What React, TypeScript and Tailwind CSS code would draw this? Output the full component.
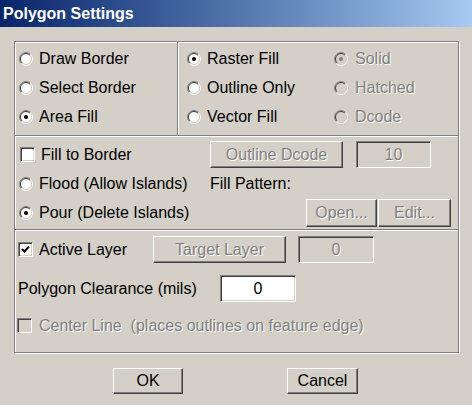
import React from "react";

const dis = "text-[#808080] [text-shadow:1px_1px_0_#fff]";

const Radio = ({ checked, disabled }: { checked?: boolean; disabled?: boolean }) => (
  <svg width="14" height="14" viewBox="0 0 14 14" className="shrink-0">
    <circle cx="7" cy="7" r="5.5" fill={disabled ? "#d4d0c8" : "#fff"} />
    <path d="M2.4 11.6 A6.5 6.5 0 0 1 11.6 2.4" stroke="#808080" strokeWidth="1" fill="none" />
    <path d="M11.6 2.4 A6.5 6.5 0 0 1 2.4 11.6" stroke="#fff" strokeWidth="1" fill="none" />
    <path d="M3.1 10.9 A5.5 5.5 0 0 1 10.9 3.1" stroke="#404040" strokeWidth="1" fill="none" />
    <path d="M10.9 3.1 A5.5 5.5 0 0 1 3.1 10.9" stroke="#d4d0c8" strokeWidth="1" fill="none" />
    {checked && <circle cx="7" cy="7" r="2" fill={disabled ? "#808080" : "#000"} />}
  </svg>
);

const Check = ({ checked, disabled }: { checked?: boolean; disabled?: boolean }) => (
  <div
    className={`w-[15px] h-[15px] shrink-0 border border-[#808080] border-r-white border-b-white shadow-[inset_1px_1px_0_#404040,inset_-1px_-1px_0_#d4d0c8] flex items-center justify-center ${
      disabled ? "bg-[#d4d0c8]" : "bg-white"
    }`}
  >
    {checked && (
      <svg width="9" height="9" viewBox="0 0 9 9">
        <path d="M1 4 L3.5 6.5 L8 1.5" stroke="#000" strokeWidth="2" fill="none" />
      </svg>
    )}
  </div>
);

const Option = ({
  label,
  checked,
  disabled,
  box,
  gap = "ml-[6px]",
}: {
  label: string;
  checked?: boolean;
  disabled?: boolean;
  box?: boolean;
  gap?: string;
}) => (
  <div className="flex items-center h-[29px]">
    {box ? <Check checked={checked} disabled={disabled} /> : <Radio checked={checked} disabled={disabled} />}
    <span className={`${gap} whitespace-pre ${disabled ? dis : "text-black"}`}>{label}</span>
  </div>
);

const Btn = ({ label, disabled, w, h = "h-[27px]" }: { label: string; disabled?: boolean; w: string; h?: string }) => (
  <div
    className={`${w} ${h} shrink-0 flex items-center justify-center bg-[#d4d0c8] border border-t-white border-l-white border-r-[#404040] border-b-[#404040] shadow-[inset_-1px_-1px_0_#808080] ${
      disabled ? dis : "text-black"
    }`}
  >
    {label}
  </div>
);

const Field = ({ value, disabled, w }: { value: string; disabled?: boolean; w: string }) => (
  <div
    className={`${w} h-[27px] shrink-0 flex items-center justify-center border border-[#808080] border-r-white border-b-white shadow-[inset_1px_1px_0_#404040,inset_-1px_-1px_0_#d4d0c8] ${
      disabled ? "bg-[#d4d0c8] " + dis : "bg-white text-black"
    }`}
  >
    {value}
  </div>
);

const HLine = () => <div className="h-[2px] border-t border-[#808080] border-b border-b-white" />;

export default function App() {
  return (
    <div className="w-[472px] h-[405px] bg-[#d4d0c8] text-[16px] leading-none font-['Liberation_Sans',Arial,sans-serif] overflow-hidden">
      <div className="h-[27px] flex items-center pl-[3px] bg-gradient-to-r from-[#0a246a] to-[#a6caf0] text-white font-bold">
        Polygon Settings
      </div>

      <div className="ml-[14px] mt-[14px] w-[445px] border border-[#808080] shadow-[inset_1px_1px_0_#fff,1px_1px_0_#fff]">
        {/* fill type */}
        <div className="flex h-[93px]">
          <div className="w-[162px] pl-[4px] pt-[2px] flex flex-col">
            <Option label="Draw Border" />
            <Option label="Select Border" />
            <Option label="Area Fill" checked />
          </div>
          <div className="w-[2px] border-l border-[#808080] border-r border-r-white" />
          <div className="flex pl-[8px] pt-[2px]">
            <div className="w-[147px] flex flex-col">
              <Option label="Raster Fill" checked />
              <Option label="Outline Only" />
              <Option label="Vector Fill" />
            </div>
            <div className="flex flex-col">
              <Option label="Solid" checked disabled gap="ml-[7px]" />
              <Option label="Hatched" disabled gap="ml-[7px]" />
              <Option label="Dcode" disabled gap="ml-[7px]" />
            </div>
          </div>
        </div>
        <HLine />

        {/* flood / pour */}
        <div className="h-[92px] pt-[3px] flex flex-col">
          <div className="flex items-center h-[29px]">
            <div className="w-[195px] pl-[5px]">
              <Option label="Fill to Border" box gap="ml-[6px]" />
            </div>
            <Btn label="Outline Dcode" disabled w="w-[133px]" />
            <div className="ml-[13px]">
              <Field value="10" disabled w="w-[75px]" />
            </div>
          </div>
          <div className="flex items-center h-[29px]">
            <div className="w-[195px] pl-[4px]">
              <Option label="Flood (Allow Islands)" />
            </div>
            <span>Fill Pattern:</span>
          </div>
          <div className="flex items-center h-[29px]">
            <div className="w-[291px] pl-[4px]">
              <Option label="Pour (Delete Islands)" checked />
            </div>
            <Btn label="Open..." disabled w="w-[71px]" h="h-[28px]" />
            <div className="ml-[1px]">
              <Btn label="Edit..." disabled w="w-[73px]" h="h-[28px]" />
            </div>
          </div>
        </div>
        <HLine />

        {/* layer / clearance */}
        <div className="h-[121px] pt-[4px] flex flex-col">
          <div className="flex items-center h-[29px]">
            <div className="w-[138px] pl-[3px]">
              <Option label="Active Layer" box checked gap="ml-[6px]" />
            </div>
            <Btn label="Target Layer" disabled w="w-[133px]" />
            <div className="ml-[12px]">
              <Field value="0" disabled w="w-[76px]" />
            </div>
          </div>
          <div className="flex items-center h-[29px] mt-[10px]">
            <div className="w-[205px] pl-[3px]">Polygon Clearance (mils)</div>
            <Field value="0" w="w-[76px]" />
          </div>
          <div className="mt-[8px] pl-[2px]">
            <Option label="Center Line  (places outlines on feature edge)" box disabled gap="ml-[7px]" />
          </div>
        </div>
      </div>

      <div className="flex mt-[15px] pl-[113px]">
        <Btn label="OK" w="w-[70px]" h="h-[26px]" />
        <div className="ml-[104px]">
          <Btn label="Cancel" w="w-[71px]" h="h-[26px]" />
        </div>
      </div>
    </div>
  );
}
